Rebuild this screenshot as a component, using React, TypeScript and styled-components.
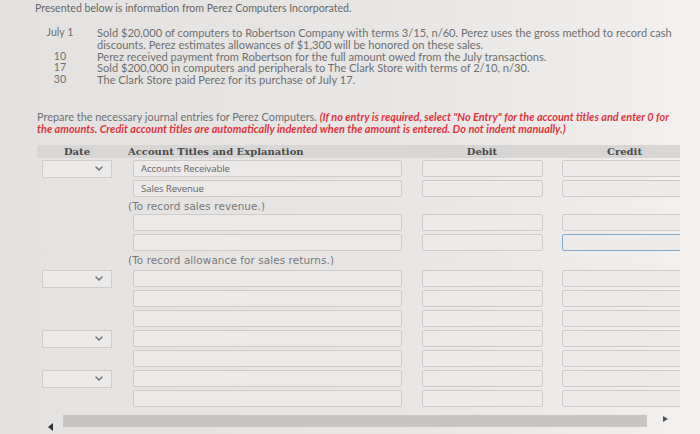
import React from 'react'
import styled, { createGlobalStyle } from 'styled-components'

const GlobalStyle = createGlobalStyle`
  html, body {
    margin: 0;
    padding: 0;
  }
  body {
    width: 700px;
    height: 434px;
    overflow: hidden;
    background: linear-gradient(90deg, #e4e2e1 0%, #e8e6e5 55%, #efeeed 92%, #f3f2f1 100%);
    font-family: Lato, "Open Sans", sans-serif;
  }
`

type Txn = { day: string; lines: string[] }

const transactions: Txn[] = [
  {
    day: 'July 1',
    lines: [
      'Sold $20,000 of computers to Robertson Company with terms 3/15, n/60. Perez uses the gross method to record cash',
      'discounts. Perez estimates allowances of $1,300 will be honored on these sales.',
    ],
  },
  {
    day: '10',
    lines: ['Perez received payment from Robertson for the full amount owed from the July transactions.'],
  },
  {
    day: '17',
    lines: ['Sold $200,000 in computers and peripherals to The Clark Store with terms of 2/10, n/30.'],
  },
  { day: '30', lines: ['The Clark Store paid Perez for its purchase of July 17.'] },
]

type Entry =
  | { kind: 'row'; date?: boolean; account?: string; focusCredit?: boolean }
  | { kind: 'note'; text: string; height: number }

const entries: Entry[] = [
  { kind: 'row', date: true, account: 'Accounts Receivable' },
  { kind: 'row', account: 'Sales Revenue' },
  { kind: 'note', text: '(To record sales revenue.)', height: 14 },
  { kind: 'row' },
  { kind: 'row', focusCredit: true },
  { kind: 'note', text: '(To record allowance for sales returns.)', height: 16 },
  { kind: 'row', date: true },
  { kind: 'row' },
  { kind: 'row' },
  { kind: 'row', date: true },
  { kind: 'row' },
  { kind: 'row', date: true },
  { kind: 'row' },
]

const App: React.FC = () => {
  return (
    <>
      <GlobalStyle />
      <Page>
        <Title>Presented below is information from Perez Computers Incorporated.</Title>
        <TxnList>
          {transactions.map((t) => (
            <TxnRow key={t.day}>
              <TxnDay>{t.day}</TxnDay>
              <div>
                {t.lines.map((l) => (
                  <TxnLine key={l}>{l}</TxnLine>
                ))}
              </div>
            </TxnRow>
          ))}
        </TxnList>
        <Instructions>
          <InstrLine>
            <span>Prepare the necessary journal entries for Perez Computers. </span>
            <Warn>
              (If no entry is required, select "No Entry" for the account titles and enter 0 for
            </Warn>
          </InstrLine>
          <InstrLine>
            <Warn>
              the amounts. Credit account titles are automatically indented when the amount is
              entered. Do not indent manually.)
            </Warn>
          </InstrLine>
        </Instructions>
        <TableViewport>
          <Table>
            <HeaderRow>
              <HeadCell>Date</HeadCell>
              <HeadCell $align="left">Account Titles and Explanation</HeadCell>
              <HeadCell>Debit</HeadCell>
              <HeadCell>Credit</HeadCell>
            </HeaderRow>
            {entries.map((e, i) =>
              e.kind === 'note' ? (
                <NoteRow key={i} $h={e.height}>
                  <span />
                  <NoteText>{e.text}</NoteText>
                </NoteRow>
              ) : (
                <EntryRow key={i}>
                  <DateCell>
                    {e.date && (
                      <DateSelect>
                        <svg width="8" height="5" viewBox="0 0 8 5">
                          <path
                            d="M1 1 L4 4 L7 1"
                            fill="none"
                            stroke="#767676"
                            strokeWidth="1.5"
                            strokeLinecap="round"
                          />
                        </svg>
                      </DateSelect>
                    )}
                  </DateCell>
                  <AccountBox>{e.account}</AccountBox>
                  <AmountBox />
                  <AmountBox $focus={e.focusCredit} />
                </EntryRow>
              )
            )}
          </Table>
        </TableViewport>
        <ScrollBar>
          <ArrowLeft />
          <Thumb />
          <ArrowRight />
        </ScrollBar>
      </Page>
    </>
  )
}

const Page = styled.div`
  padding: 2px 0 0 35px;
  color: #6e6e6e;
`

const Title = styled.div`
  font-size: 10.6px;
  line-height: 12px;
  color: #666;
`

const TxnList = styled.div`
  margin-top: 13px;
  display: flex;
  flex-direction: column;
`

const TxnRow = styled.div`
  display: grid;
  grid-template-columns: 62px 1fr;
`

const TxnDay = styled.div`
  width: 50px;
  text-align: center;
  font-size: 10.6px;
  line-height: 11.8px;
`

const TxnLine = styled.div`
  font-size: 11.1px;
  line-height: 11.8px;
  white-space: nowrap;
`

const Instructions = styled.div`
  margin: 25px 0 0 2px;
  font-size: 10.9px;
  color: #707070;
`

const InstrLine = styled.div`
  height: 12.5px;
  line-height: 12.5px;
  white-space: nowrap;
`

const Warn = styled.span`
  color: #e0353d;
  font-weight: 700;
  font-style: italic;
`

const TableViewport = styled.div`
  margin: 9px 0 0 2px;
  width: 643px;
  overflow: hidden;
`

const Table = styled.div`
  width: 660px;
  display: flex;
  flex-direction: column;
`

const columns = `80px 295px 140px 145px`

const HeaderRow = styled.div`
  display: grid;
  grid-template-columns: ${columns};
  height: 13px;
  margin-bottom: 2px;
  background: #d7d6d5;
`

const HeadCell = styled.div<{ $align?: 'left' | 'center' }>`
  font-family: "DejaVu Serif", serif;
  font-weight: 700;
  font-size: 10px;
  line-height: 13px;
  color: #4a4a4a;
  text-align: ${(p) => p.$align ?? 'center'};
  padding-left: ${(p) => (p.$align === 'left' ? '11px' : '0')};
  white-space: nowrap;
`

const EntryRow = styled.div`
  display: grid;
  grid-template-columns: ${columns};
  height: 20px;
  align-items: start;
`

const DateCell = styled.div`
  padding-left: 5px;
`

const DateSelect = styled.div`
  box-sizing: border-box;
  width: 70px;
  height: 18px;
  border: 1px solid #cfcdcc;
  background: #ebeae9;
  display: flex;
  align-items: center;
  justify-content: flex-end;
  padding-right: 8px;
`

const AccountBox = styled.div`
  box-sizing: border-box;
  margin-left: 16px;
  width: 269px;
  height: 17px;
  border: 1px solid #cdcbca;
  border-radius: 2px;
  background: #ebeae9;
  padding-left: 7px;
  font-family: "Open Sans", sans-serif;
  font-size: 9.6px;
  line-height: 15px;
  color: #666;
  letter-spacing: -0.1px;
`

const AmountBox = styled.div<{ $focus?: boolean }>`
  box-sizing: border-box;
  margin-left: 10px;
  width: 121px;
  height: 17px;
  border: ${(p) => (p.$focus ? '1.5px solid #86a9cf' : '1px solid #cdcbca')};
  border-radius: 2px;
  background: #ecebea;
`

const NoteRow = styled.div<{ $h: number }>`
  display: grid;
  grid-template-columns: 80px 1fr;
  height: ${(p) => p.$h}px;
`

const NoteText = styled.div`
  padding-left: 11px;
  font-family: "DejaVu Sans", sans-serif;
  font-size: 10.4px;
  line-height: 12px;
  color: #777;
  letter-spacing: 0.1px;
  white-space: nowrap;
`

const ScrollBar = styled.div`
  margin: 5px 0 0 13px;
  width: 620px;
  height: 12px;
  display: flex;
  align-items: center;
  gap: 10px;
`

const ArrowLeft = styled.div`
  width: 0;
  height: 0;
  margin-top: 12px;
  border-top: 4px solid transparent;
  border-bottom: 4px solid transparent;
  border-right: 5px solid #333;
`

const Thumb = styled.div`
  flex: 1;
  height: 12px;
  background: #c6c5c4;
`

const ArrowRight = styled.div`
  width: 0;
  height: 0;
  margin-left: 6px;
  margin-top: -4px;
  border-top: 3px solid transparent;
  border-bottom: 3px solid transparent;
  border-left: 5px solid #555;
`

export default App
